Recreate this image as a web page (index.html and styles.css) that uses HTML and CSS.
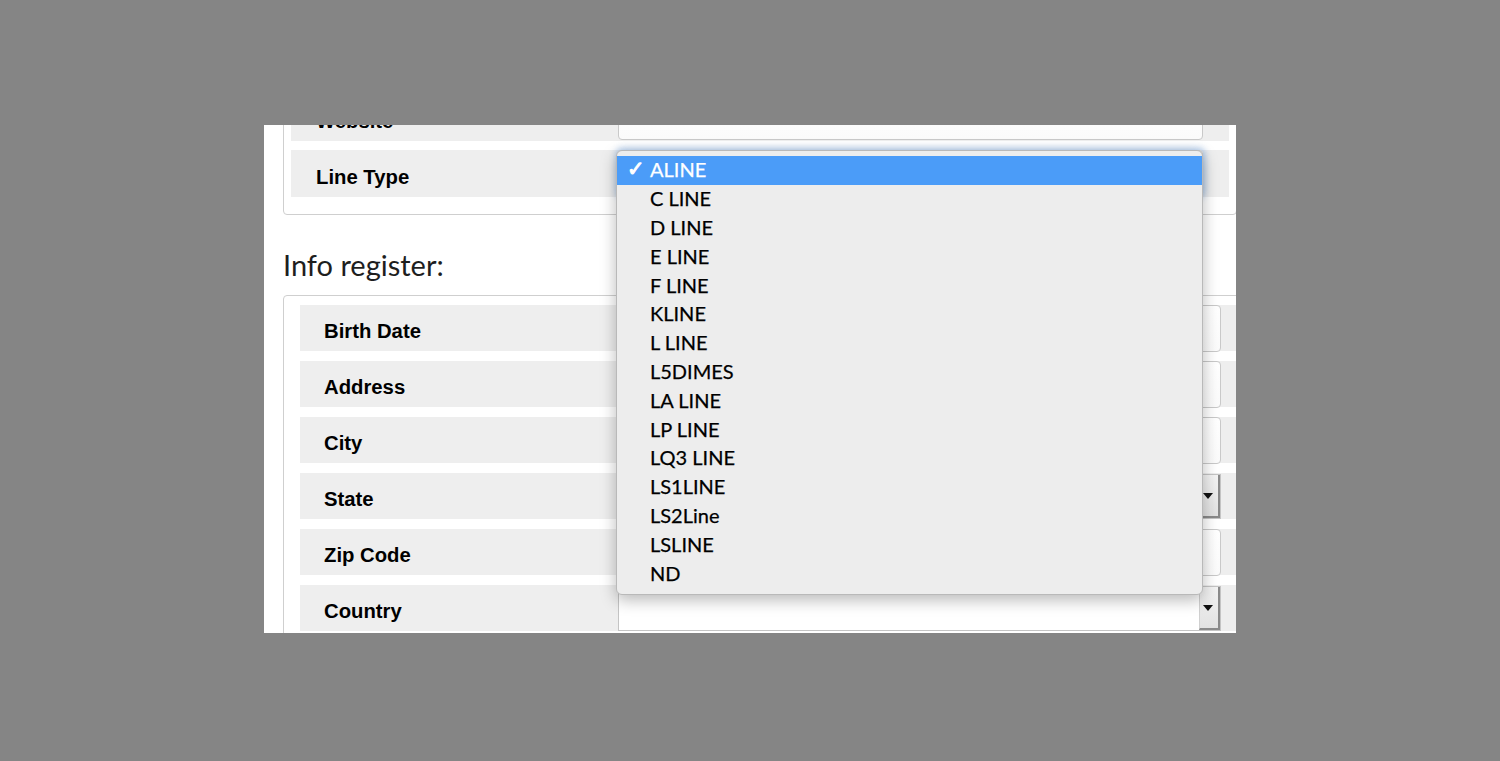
FILE: index.html
```html
<!DOCTYPE html>
<html lang="en">
<head>
<meta charset="utf-8">
<title>Info register</title>
<link rel="stylesheet" href="styles.css">
</head>
<body>
<div class="panel">
  <div class="scroll">
    <div class="box box-top">
      <div class="row row-top">
        <div class="label">Website</div>
        <div class="input"></div>
      </div>
      <div class="row row-top">
        <div class="label">Line Type</div>
        <div class="input focused"></div>
      </div>
    </div>

    <h2 class="heading">Info register:</h2>

    <div class="box box-info">
      <div class="row row-info">
        <div class="label">Birth Date</div>
        <div class="input"></div>
      </div>
      <div class="row row-info">
        <div class="label">Address</div>
        <div class="input"></div>
      </div>
      <div class="row row-info">
        <div class="label">City</div>
        <div class="input"></div>
      </div>
      <div class="row row-info">
        <div class="label">State</div>
        <div class="select"><span class="select-btn"><span class="arrow"></span></span></div>
      </div>
      <div class="row row-info">
        <div class="label">Zip Code</div>
        <div class="input"></div>
      </div>
      <div class="row row-info">
        <div class="label">Country</div>
        <div class="select"><span class="select-btn"><span class="arrow"></span></span></div>
      </div>
    </div>
  </div>

  <ul class="menu">
    <li class="item selected"><span class="check">✓</span>ALINE</li>
    <li class="item"><span class="check"></span>C LINE</li>
    <li class="item"><span class="check"></span>D LINE</li>
    <li class="item"><span class="check"></span>E LINE</li>
    <li class="item"><span class="check"></span>F LINE</li>
    <li class="item"><span class="check"></span>KLINE</li>
    <li class="item"><span class="check"></span>L LINE</li>
    <li class="item"><span class="check"></span>L5DIMES</li>
    <li class="item"><span class="check"></span>LA LINE</li>
    <li class="item"><span class="check"></span>LP LINE</li>
    <li class="item"><span class="check"></span>LQ3 LINE</li>
    <li class="item"><span class="check"></span>LS1LINE</li>
    <li class="item"><span class="check"></span>LS2Line</li>
    <li class="item"><span class="check"></span>LSLINE</li>
    <li class="item"><span class="check"></span>ND</li>
  </ul>
</div>
</body>
</html>
```

FILE: styles.css
```css
html, body {
  margin: 0;
  padding: 0;
}

body {
  background: #858585;
  height: 761px;
  overflow: hidden;
  font-family: "Liberation Sans", Arial, sans-serif;
}

.panel {
  position: relative;
  margin: 125px 0 0 264px;
  width: 972px;
  height: 508px;
  background: #ffffff;
  overflow: hidden;
}

.scroll {
  margin-top: -41px;
  width: 1000px;
}

.box {
  box-sizing: border-box;
  border: 1px solid #cfcfcf;
  border-radius: 4px;
  margin-left: 19px;
  display: flex;
  flex-direction: column;
}

.box-top {
  width: 954px;
  padding: 9px 7px 17px 7px;
  gap: 9px;
}

.box-info {
  width: 980px;
  padding: 9px 0 20px 16px;
  gap: 10px;
}

.row {
  display: grid;
  background: #eeeeee;
  align-items: stretch;
}

.row-top {
  height: 47px;
  grid-template-columns: 327px 585px;
  padding-bottom: 1px;
  box-sizing: border-box;
}

.row-info {
  height: 46px;
  grid-template-columns: 318px 603px;
}

.label {
  display: flex;
  align-items: center;
  padding-left: 24px;
  font-weight: bold;
  font-size: 20.3px;
  color: #000;
  padding-top: 6px;
}

.row-top .label {
  padding-left: 25px;
  padding-top: 8px;
}

.input {
  box-sizing: border-box;
  background: linear-gradient(#ffffff, #fbfbfb);
  border: 1px solid #c9c9c9;
  border-radius: 4px;
}

.row-info .input {
  margin-bottom: -1px;
}

.focused {
  box-shadow: 0 0 6px 2px rgba(90, 150, 225, 0.45);
}

.select {
  box-sizing: border-box;
  background: #ffffff;
  border: 1px solid #c4c4c4;
  margin-top: 1px;
  display: flex;
  justify-content: flex-end;
}

.select-btn {
  box-sizing: border-box;
  width: 21px;
  background: linear-gradient(#f3f3f3, #e2e2e2);
  border-left: 1px solid #d0d0d0;
  border-right: 2px solid #8a8a8a;
  border-bottom: 2px solid #8a8a8a;
  display: flex;
  align-items: center;
  justify-content: center;
}

.arrow {
  width: 0;
  height: 0;
  border-left: 5px solid transparent;
  border-right: 5px solid transparent;
  border-top: 6px solid #111;
  margin-left: -2px;
}

.heading {
  margin: 32px 0 13px 19px;
  font-family: Lato, "Liberation Sans", sans-serif;
  font-weight: normal;
  font-size: 29px;
  line-height: 35px;
  color: #1e1e1e;
}

.menu {
  position: absolute;
  left: 352px;
  top: 25px;
  width: 587px;
  height: 445px;
  box-sizing: border-box;
  margin: 0;
  padding: 5px 0 0 0;
  list-style: none;
  background: #ededed;
  border: 1px solid #b9b9b9;
  border-radius: 6px;
  box-shadow: 0 5px 16px rgba(0, 0, 0, 0.28);
  font-family: Lato, "Liberation Sans", sans-serif;
  font-size: 20px;
  color: #000;
  -webkit-text-stroke: 0.25px #000;
}

.item {
  box-sizing: border-box;
  height: 28.8px;
  padding-left: 10px;
  padding-bottom: 2px;
  display: flex;
  align-items: center;
  white-space: nowrap;
}

.selected {
  background: #4b9cf8;
  color: #ffffff;
  -webkit-text-stroke: 0.25px #ffffff;
}

.check {
  display: inline-block;
  width: 23px;
  font-family: "DejaVu Sans", sans-serif;
  font-size: 21px;
  font-weight: bold;
  -webkit-text-stroke: 1px #ffffff;
}
```
